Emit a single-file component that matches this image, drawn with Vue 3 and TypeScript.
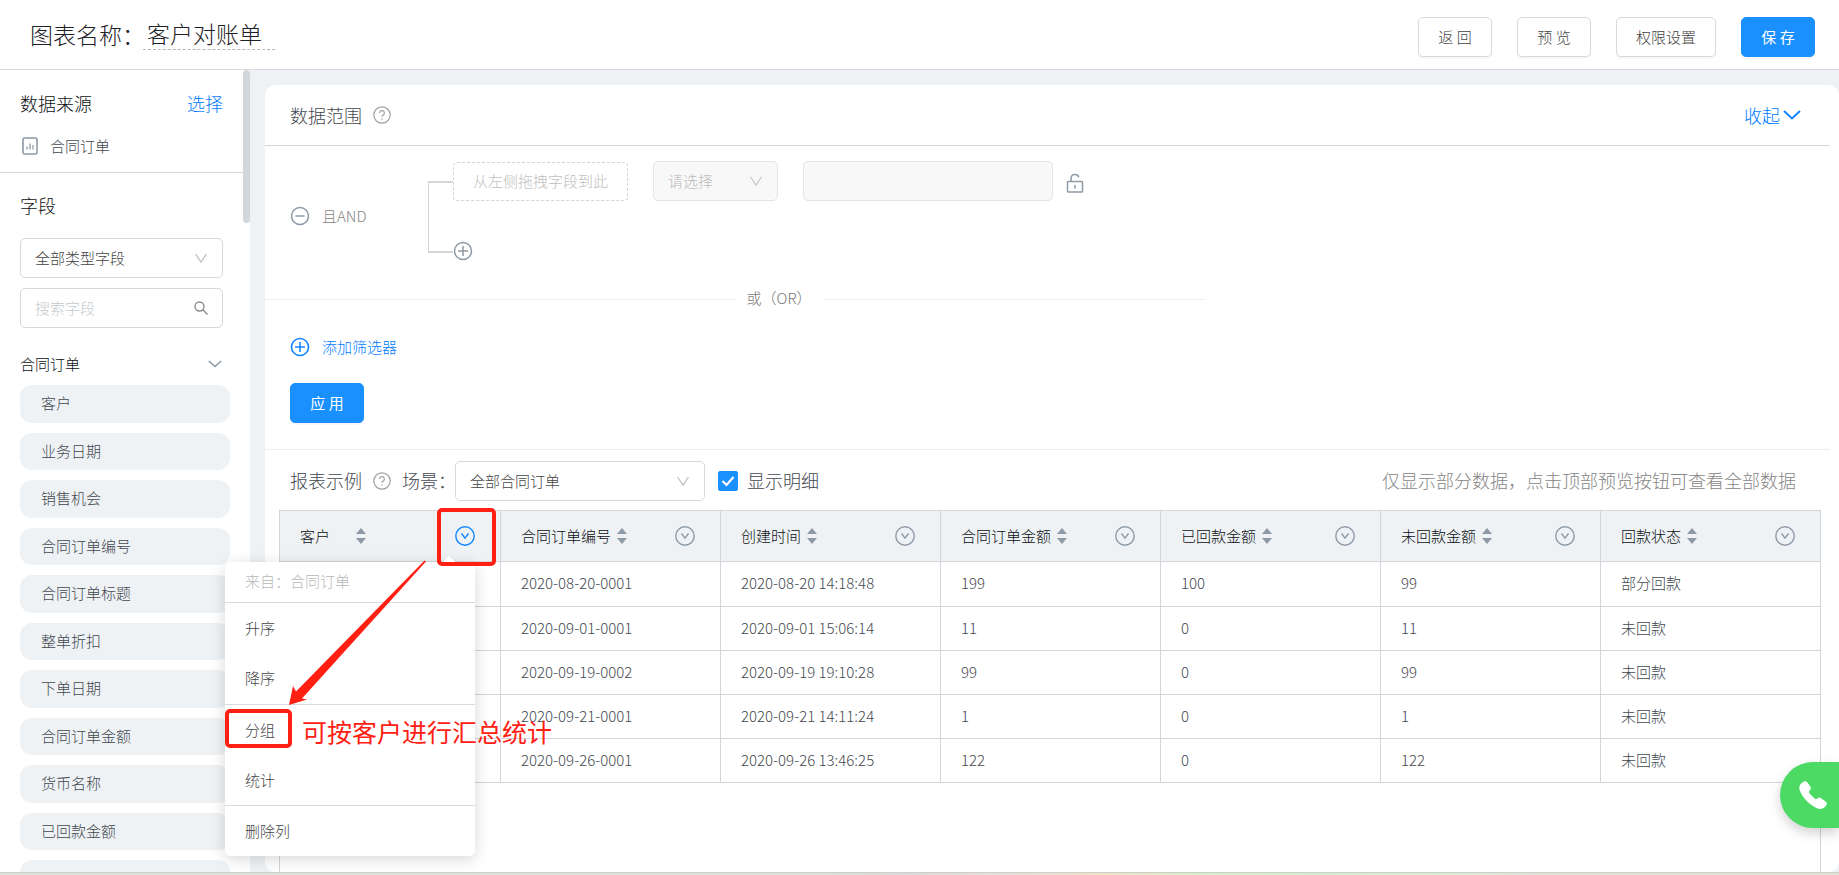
<script setup lang="ts">
import { ref } from 'vue'

interface Column {
  title: string
  spaced?: boolean
  active?: boolean
}

const chartName = ref('客户对账单')
const showDetail = ref(true)

const fields: string[] = [
  '客户', '业务日期', '销售机会', '合同订单编号', '合同订单标题', '整单折扣',
  '下单日期', '合同订单金额', '货币名称', '已回款金额', '',
]

const columns: Column[] = [
  { title: '客户', spaced: true, active: true },
  { title: '合同订单编号' },
  { title: '创建时间' },
  { title: '合同订单金额' },
  { title: '已回款金额' },
  { title: '未回款金额' },
  { title: '回款状态' },
]

const rows: string[][] = [
  ['', '2020-08-20-0001', '2020-08-20 14:18:48', '199', '100', '99', '部分回款'],
  ['', '2020-09-01-0001', '2020-09-01 15:06:14', '11', '0', '11', '未回款'],
  ['', '2020-09-19-0002', '2020-09-19 19:10:28', '99', '0', '99', '未回款'],
  ['', '2020-09-21-0001', '2020-09-21 14:11:24', '1', '0', '1', '未回款'],
  ['', '2020-09-26-0001', '2020-09-26 13:46:25', '122', '0', '122', '未回款'],
]

const menuGroups: string[][] = [['升序', '降序'], ['分组', '统计'], ['删除列']]
</script>

<template>
  <div class="page">
    <header class="topbar">
      <label class="chart-label" for="chart-name">图表名称：</label>
      <input id="chart-name" v-model="chartName" class="chart-name" type="text" />
      <div class="actions">
        <button class="btn" type="button">返 回</button>
        <button class="btn" type="button">预 览</button>
        <button class="btn" type="button">权限设置</button>
        <button class="btn primary" type="button">保 存</button>
      </div>
    </header>

    <div class="body">
      <aside class="sidebar">
        <div class="side-content">
          <section class="source">
            <div class="source-head">
              <h2>数据来源</h2>
              <a href="#">选择</a>
            </div>
            <div class="source-item">
              <svg width="18" height="20" viewBox="0 0 18 20" fill="none" stroke="#8f9aa7">
                <rect x="2" y="2" width="14" height="16" rx="1.5" stroke-width="1.6" />
                <path d="M6 10.5v3M9 7.5v6M12 9v4.500" stroke-width="1.3" />
              </svg>
              <span>合同订单</span>
            </div>
          </section>
          <section class="field-area">
            <h2>字段</h2>
            <div class="control">
              <select aria-label="字段类型"><option>全部类型字段</option></select>
              <svg class="suffix" width="14" height="14" viewBox="0 0 14 14" fill="none" stroke="#bfbfbf" stroke-width="1.300">
                <path d="M1.500 3 7 11l5.500-8" />
              </svg>
            </div>
            <div class="control">
              <input class="search" type="text" placeholder="搜索字段" aria-label="搜索字段" />
              <svg class="suffix" width="14" height="14" viewBox="0 0 14 14" fill="none" stroke="#8c8c8c" stroke-width="1.400">
                <circle cx="5.500" cy="5.500" r="4.500" />
                <path d="m8.800 8.800 4.700 4.700" />
              </svg>
            </div>
            <div class="group-head">
              <span>合同订单</span>
              <svg width="14" height="8" viewBox="0 0 14 8" fill="none" stroke="#8f9aa7" stroke-width="1.600">
                <path d="m.8 1 6.200 5.500L13.200 1" />
              </svg>
            </div>
            <ul class="fields">
              <li v-for="f in fields" :key="f">{{ f }}</li>
            </ul>
          </section>
        </div>
        <div class="scrollbar"><div class="thumb"></div></div>
      </aside>

      <main class="main">
        <div class="card">
          <section class="range-head">
            <h2>数据范围</h2>
            <svg class="help" width="18" height="18" viewBox="0 0 18 18" fill="none" stroke="#a0a0a0" stroke-width="1.200">
              <circle cx="9" cy="9" r="8.200" />
              <path d="M6.600 7a2.400 2.400 0 1 1 3.500 2.100c-.8.400-1.100.8-1.100 1.700M9 12.400v1.400" />
            </svg>
            <a class="collapse" href="#">
              <span>收起</span>
              <svg width="18" height="10" viewBox="0 0 18 10" fill="none" stroke="#1287ff" stroke-width="2">
                <path d="m1 1 8 7.500L17 1" />
              </svg>
            </a>
          </section>

          <section class="filters">
            <div class="and-group">
              <button class="icon-btn" type="button" aria-label="删除条件组">
                <svg width="20" height="20" viewBox="0 0 20 20" fill="none" stroke="#8f9aa7" stroke-width="1.500">
                  <circle cx="10" cy="10" r="8.500" /><path d="M5.500 10h9" />
                </svg>
              </button>
              <span class="and-text">且AND</span>
              <div class="bracket"></div>
              <div class="conditions">
                <div class="condition">
                  <div class="drop-target">从左侧拖拽字段到此</div>
                  <div class="control operator">
                    <select disabled aria-label="条件"><option>请选择</option></select>
                    <svg class="suffix" width="14" height="14" viewBox="0 0 14 14" fill="none" stroke="#c8c8c8" stroke-width="1.300">
                      <path d="M1.500 3 7 11l5.500-8" />
                    </svg>
                  </div>
                  <div class="control value"><input type="text" disabled aria-label="值" /></div>
                  <svg class="lock" width="18" height="20" viewBox="0 0 18 20" fill="none" stroke="#8f9aa7" stroke-width="1.500">
                    <rect x="1.500" y="8.500" width="15" height="10.500" rx=".8" />
                    <path d="M5 8.500V5.500a4 4 0 0 1 7.800-1.200M9 12v3.500" />
                  </svg>
                </div>
                <button class="icon-btn" type="button" aria-label="添加条件">
                  <svg width="20" height="20" viewBox="0 0 20 20" fill="none" stroke="#8f9aa7" stroke-width="1.500">
                    <circle cx="10" cy="10" r="8.500" /><path d="M5 10h10M10 5v10" />
                  </svg>
                </button>
              </div>
            </div>
            <div class="or-line"><span>或（OR）</span></div>
            <button class="add-filter" type="button">
              <svg width="20" height="20" viewBox="0 0 20 20" fill="none" stroke="#1287ff" stroke-width="1.600">
                <circle cx="10" cy="10" r="8.500" /><path d="M5 10h10M10 5v10" />
              </svg>
              <span>添加筛选器</span>
            </button>
            <button class="btn primary" type="button">应 用</button>
          </section>

          <section class="report">
            <div class="report-bar">
              <h2>报表示例</h2>
              <svg class="help" width="18" height="18" viewBox="0 0 18 18" fill="none" stroke="#a0a0a0" stroke-width="1.200">
                <circle cx="9" cy="9" r="8.200" />
                <path d="M6.600 7a2.400 2.400 0 1 1 3.500 2.100c-.8.400-1.100.8-1.100 1.700M9 12.400v1.400" />
              </svg>
              <label class="scene-label" for="scene">场景：</label>
              <div class="control scene">
                <select id="scene"><option>全部合同订单</option></select>
                <svg class="suffix" width="14" height="14" viewBox="0 0 14 14" fill="none" stroke="#bfbfbf" stroke-width="1.300">
                  <path d="M1.500 3 7 11l5.500-8" />
                </svg>
              </div>
              <label class="detail">
                <input v-model="showDetail" type="checkbox" />
                <svg v-if="showDetail" class="tick" width="20" height="20" viewBox="0 0 20 20" fill="none" stroke="#fff" stroke-width="2.200">
                  <path d="m4.500 10 4 4 7-8" />
                </svg>
                <span>显示明细</span>
              </label>
              <span class="note">仅显示部分数据，点击顶部预览按钮可查看全部数据</span>
            </div>
            <div class="table-wrap">
              <table>
                <thead>
                  <tr>
                    <th v-for="c in columns" :key="c.title" scope="col">
                      <div class="th">
                        <span :class="{ spaced: c.spaced }">{{ c.title }}</span>
                        <svg width="12" height="18" viewBox="0 0 12 18" fill="#8f9aa7">
                          <path d="M1 7 6 1l5 6zM1 11l5 6 5-6z" />
                        </svg>
                        <button class="icon-btn col-menu" :class="{ active: c.active }" type="button" :aria-label="c.title + ' 列菜单'">
                          <svg width="20" height="20" viewBox="0 0 20 20" fill="none" stroke="currentColor" stroke-width="1.400">
                            <circle cx="10" cy="10" r="9.200" /><path d="m6.500 7.500 3.500 4.700 3.500-4.700" />
                          </svg>
                        </button>
                      </div>
                    </th>
                  </tr>
                </thead>
                <tbody>
                  <tr v-for="(r, i) in rows" :key="i">
                    <td v-for="(v, j) in r" :key="j">{{ v }}</td>
                  </tr>
                </tbody>
              </table>
            </div>
          </section>
        </div>
      </main>
    </div>
    <div class="desktop-edge"></div>

    <div class="menu">
      <div class="menu-title">来自：合同订单</div>
      <div v-for="(g, i) in menuGroups" :key="i" class="menu-group">
        <button v-for="m in g" :key="m" type="button">{{ m }}</button>
      </div>
    </div>

    <div class="mark mark-trigger"></div>
    <div class="mark mark-item"></div>
    <svg class="arrow" width="138" height="146" viewBox="0 0 138 146" fill="#ff2013">
      <path d="M0 145 4 126l3 5.500L135.500.5l1.500 1L13 138.500l5 1z" />
    </svg>
    <p class="mark-text">可按客户进行汇总统计</p>

    <button class="phone" type="button" aria-label="电话">
      <svg width="28" height="28" viewBox="0 0 28 28" fill="#fff">
        <path d="M4.500.8C6.200-.3 7.800.5 9 2.200l2.300 3.400c1 1.600.7 2.400-.5 3.700-1 1.100-.9 2.100-.2 3.100l4.900 5.200c1 .8 1.900.6 2.900-.2 1.400-1.100 2.400-1.200 3.800-.2l4.400 3.200c1.600 1.300 1.600 2.400.6 3.800-2.700 3.800-5.700 4.600-9.700 2.800C10 23.500 3.500 16.500.8 9.500-.6 6 .8 3 4.500.8Z" />
      </svg>
    </button>
  </div>
</template>

<style>
body {
  margin: 0;
}
</style>

<style scoped>
.page {
  position: relative;
  display: flex;
  flex-direction: column;
  height: 100vh;
  overflow: hidden;
  background: #fff;
  color: #42484f;
  font-family: "Noto Sans CJK SC", "Noto Sans", sans-serif;
  font-size: 15px;
  font-weight: 300;
  line-height: 24px;
}
.page * {
  box-sizing: border-box;
}
button, input, select {
  font: inherit;
  color: inherit;
}
h2, ul, p {
  margin: 0;
  padding: 0;
  font-weight: 300;
}
h2 {
  font-size: 18px;
}
a {
  color: #007bff;
  font-size: 18px;
  text-decoration: none;
}
svg {
  flex: none;
  display: block;
}

.topbar {
  display: flex;
  flex: none;
  align-items: flex-start;
  height: 70px;
  padding: 17px 24px 0 30px;
  border-bottom: 1px solid #d4d8dc;
  color: #1d2125;
}
.chart-label {
  width: 113px;
  font-size: 23px;
  line-height: 34px;
  white-space: nowrap;
}
.chart-name {
  width: 132px;
  height: 33px;
  padding: 0 4px;
  border: 0;
  border-bottom: 1px dashed #b4b8bc;
  outline: 0;
  background: none;
  font-size: 23px;
}
.actions {
  display: flex;
  gap: 25px;
  margin-left: auto;
}
.btn {
  min-width: 74px;
  height: 40px;
  padding: 0 19px;
  border: 1px solid #d9d9d9;
  border-radius: 5px;
  background: #fff;
  box-shadow: 0 2px 0 rgba(0, 0, 0, 0.03);
  color: #444;
  white-space: nowrap;
}
.btn.primary {
  border-color: #1a90ff;
  background: #1a90ff;
  color: #fff;
  font-weight: 400;
}

.body {
  display: flex;
  flex: 1;
  min-height: 0;
}
.sidebar {
  display: flex;
  flex: none;
  width: 250px;
  overflow: hidden;
}
.side-content {
  flex: 1;
  color: #0c0f12;
}
.source {
  height: 103px;
  padding: 21px 20px 0;
  border-bottom: 1px solid #d4d8dc;
}
.source-head {
  display: flex;
  justify-content: space-between;
}
.source-item {
  display: flex;
  align-items: center;
  gap: 11px;
  margin-top: 19px;
  padding-left: 1px;
  color: #42484f;
}
.field-area {
  padding: 20px 13px 0 20px;
}
.control {
  position: relative;
}
.field-area .control {
  width: 203px;
  margin-top: 10px;
}
.field-area h2 + .control {
  margin-top: 21px;
}
.control select,
.control input {
  display: block;
  width: 100%;
  height: 40px;
  padding: 0 14px;
  border: 1px solid #d9d9d9;
  border-radius: 5px;
  outline: 0;
  appearance: none;
  background: #fff;
  color: #444;
}
.control .search {
  padding-bottom: 2px;
}
.control input::placeholder {
  color: #c6c9cc;
  opacity: 1;
}
.control select:disabled,
.control input:disabled {
  border-color: #e2e4e6;
  background: #f8f8f8;
  color: #bcbcbc;
  opacity: 1;
}
.suffix {
  position: absolute;
  top: 13px;
  right: 15px;
  pointer-events: none;
}
.group-head {
  display: flex;
  align-items: center;
  justify-content: space-between;
  margin-top: 24px;
  padding-right: 8px;
}
.fields {
  display: flex;
  flex-direction: column;
  gap: 10px;
  margin-top: 9px;
  list-style: none;
}
.fields li {
  flex: none;
  height: 37px;
  padding-left: 21px;
  border-radius: 12px;
  background: #eef2f5;
  color: #42484f;
  line-height: 36px;
}
.fields li:nth-child(odd) {
  height: 38px;
}
.scrollbar {
  flex: none;
  width: 7px;
}
.thumb {
  height: 153px;
  border-radius: 4px;
  background: #d2d7db;
}

.main {
  display: flex;
  flex: 1;
  min-width: 0;
  padding: 15px 0 0 15px;
  background: #eef2f5;
}
.card {
  display: flex;
  flex: 1;
  flex-direction: column;
  min-width: 0;
  padding-right: 9px;
  border-radius: 10px;
  background: #fff;
}
.range-head {
  display: flex;
  flex: none;
  align-items: center;
  height: 61px;
  padding: 0 29px 0 25px;
  border-bottom: 1px solid #d4d8dc;
}
.range-head h2,
.report-bar h2 {
  width: 83px;
  white-space: nowrap;
}
.collapse {
  display: flex;
  align-items: center;
  gap: 3px;
  margin-left: auto;
}
.filters {
  display: flex;
  flex: none;
  flex-direction: column;
  align-items: flex-start;
  padding: 15px 0 26px 25px;
  border-bottom: 1px solid #eceeef;
}
.icon-btn {
  display: block;
  flex: none;
  width: 20px;
  height: 20px;
  padding: 0;
  border: 0;
  background: none;
}
.and-group {
  display: flex;
  align-items: center;
  height: 110px;
}
.and-text {
  width: 106px;
  margin-left: 12px;
  color: #858585;
}
.bracket {
  align-self: flex-start;
  width: 25px;
  height: 72px;
  margin-top: 20px;
  border: solid #d2d6da;
  border-width: 2px 0 2px 1px;
}
.conditions {
  display: flex;
  flex-direction: column;
  align-self: flex-start;
  gap: 40px;
}
.condition {
  display: flex;
  align-items: center;
}
.drop-target {
  width: 175px;
  height: 39px;
  border: 1px dashed #d4d4d4;
  border-radius: 4px;
  color: #c0c0c0;
  line-height: 36px;
  text-align: center;
}
.operator {
  width: 125px;
  margin-left: 25px;
}
.value {
  width: 250px;
  margin-left: 25px;
}
.lock {
  margin: 4px 0 0 13px;
}
.or-line {
  display: flex;
  align-items: center;
  align-self: flex-start;
  width: calc(60% + 15px);
  margin: 14px 0 14px -25px;
  height: 28px;
  color: #777;
}
.or-line::before,
.or-line::after {
  flex: 1;
  height: 1px;
  background: #eceeef;
  content: "";
}
.or-line::before {
  flex: none;
  width: 50%;
}
.or-line span {
  padding: 0 12px 2px;
}
.add-filter {
  display: flex;
  align-items: center;
  gap: 12px;
  height: 40px;
  margin-bottom: 16px;
  padding: 0;
  border: 0;
  background: none;
  color: #007bff;
}

.report {
  display: flex;
  flex: 1;
  flex-direction: column;
  min-height: 0;
}
.report-bar {
  display: flex;
  flex: none;
  align-items: center;
  padding: 11px 34px 9px 25px;
  font-size: 18px;
}
.report-bar h2,
.scene-label,
.detail span,
.note {
  padding-bottom: 2px;
}
.scene-label {
  width: 53px;
  margin-left: 11px;
  white-space: nowrap;
}
.scene {
  width: 250px;
  font-size: 15px;
}
.detail {
  position: relative;
  display: flex;
  align-items: center;
  gap: 9px;
  margin-left: 13px;
  white-space: nowrap;
}
.detail input {
  width: 20px;
  height: 20px;
  margin: 0;
  border: 1px solid #d9d9d9;
  border-radius: 2px;
  appearance: none;
}
.detail input:checked {
  border-color: #1a90ff;
  background: #1a90ff;
}
.tick {
  position: absolute;
  left: 0;
  pointer-events: none;
}
.note {
  margin-left: auto;
  color: #858585;
  white-space: nowrap;
}
.table-wrap {
  flex: 1;
  margin: 0 9px 0 14px;
  border: 1px solid #d2d6da;
  border-bottom: 0;
}
table {
  width: 100%;
  border-spacing: 0;
  table-layout: fixed;
}
th, td {
  height: 44px;
  padding: 0 20px;
  border-bottom: 1px solid #d2d6da;
  text-align: left;
  white-space: nowrap;
}
td {
  padding-bottom: 2px;
}
th + th, td + td {
  border-left: 1px solid #d2d6da;
}
th {
  height: 51px;
  padding-right: 25px;
  background: #eef2f5;
  color: #0c0f12;
  font-weight: 300;
}
tbody tr:first-child td {
  height: 45px;
}
.th {
  display: flex;
  align-items: center;
  gap: 5px;
}
.spaced {
  margin-right: 20px;
}
.col-menu {
  margin-left: auto;
  color: #8f9aa7;
}
.col-menu.active {
  color: #1287ff;
}
.desktop-edge {
  flex: none;
  height: 3px;
  border-top: 1px solid #ccd0cc;
  background: linear-gradient(90deg, #dde0d9 0 45%, #dadada 49%, #e9dfd9 55%, #f3e1c4 60%, #d7efc9 65%, #d2efcd 72%, #dbefcf 78%, #e2e2d9 84%);
}

.menu {
  position: absolute;
  top: 562px;
  left: 225px;
  width: 250px;
  border-radius: 5px;
  background: #fff;
  box-shadow: 0 3px 15px rgba(0, 0, 0, 0.16);
}
.menu::before {
  position: absolute;
  top: -6px;
  left: 218px;
  border: solid transparent;
  border-width: 0 6px 6px;
  border-bottom-color: #fff;
  content: "";
}
.menu-title {
  height: 40px;
  padding-left: 20px;
  color: #b8b8b8;
  line-height: 38px;
}
.menu-group {
  border-top: 1px solid #d9dcdf;
}
.menu-title + .menu-group {
  padding-bottom: 1px;
}
.menu-group button {
  display: block;
  width: 100%;
  height: 50px;
  padding: 0 20px;
  border: 0;
  background: none;
  color: #444;
  text-align: left;
}
.mark {
  position: absolute;
  border: 4px solid #ff2013;
  border-radius: 5px;
  pointer-events: none;
}
.mark-trigger {
  top: 508px;
  left: 437px;
  width: 59px;
  height: 58px;
}
.mark-item {
  top: 709px;
  left: 225px;
  width: 67px;
  height: 39px;
}
.arrow {
  position: absolute;
  top: 560px;
  left: 289px;
  pointer-events: none;
}
.mark-text {
  position: absolute;
  top: 713px;
  left: 302px;
  color: #ff2013;
  font-size: 25px;
  font-weight: 400;
  line-height: 36px;
  white-space: nowrap;
  pointer-events: none;
}
.phone {
  position: absolute;
  right: 0;
  bottom: 47px;
  width: 59px;
  height: 66px;
  padding: 0 0 0 19px;
  border: 0;
  border-radius: 33px 0 0 33px;
  background: #4cd964;
  box-shadow: 0 5px 12px rgba(0, 0, 0, 0.18);
}
</style>
